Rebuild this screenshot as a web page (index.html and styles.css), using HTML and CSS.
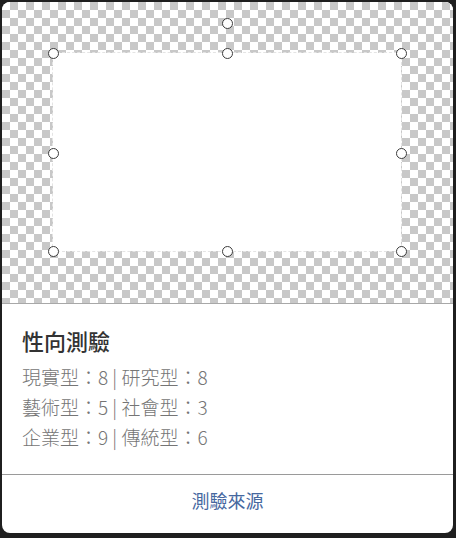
FILE: index.html
```html
<html>
<head>
<meta charset="utf-8">
<title>性向測驗</title>
<link rel="stylesheet" href="styles.css">
</head>
<body>
<div class="card">
  <div class="stage">
    <div class="frame"></div>
    <span class="handle rotate"></span>
    <span class="handle tl"></span>
    <span class="handle tc"></span>
    <span class="handle tr"></span>
    <span class="handle ml"></span>
    <span class="handle mr"></span>
    <span class="handle bl"></span>
    <span class="handle bc"></span>
    <span class="handle br"></span>
  </div>
  <div class="info">
    <h2 class="title">性向測驗</h2>
    <p class="row">現實型：8 | 研究型：8</p>
    <p class="row">藝術型：5 | 社會型：3</p>
    <p class="row">企業型：9 | 傳統型：6</p>
  </div>
  <a href="#" class="source">測驗來源</a>
</div>
</body>
</html>
```

FILE: styles.css
```css
html, body {
  margin: 0;
  padding: 0;
}
body {
  background: #1f1f1f;
  font-family: "Noto Sans CJK TC", "Noto Sans", sans-serif;
  padding: 2px 3px 5px 2px;
}
.card {
  width: 451px;
  height: 531px;
  background: #fff;
  border-radius: 8px;
  overflow: hidden;
  display: flex;
  flex-direction: column;
}
.stage {
  position: relative;
  height: 301px;
  border-bottom: 1px solid #a8a8a8;
  background-color: #fff;
  background-image: conic-gradient(#c8c8c8 25%, transparent 0 50%, #c8c8c8 0 75%, transparent 0);
  background-size: 16px 16px;
}
.frame {
  position: absolute;
  left: 51px;
  top: 51px;
  width: 348px;
  height: 198px;
  background: #fff;
  outline: 1px dashed #e4e4e4;
}
.handle {
  position: absolute;
  width: 9px;
  height: 9px;
  margin: -5px 0 0 -5px;
  border: 1px solid #3c3c3c;
  border-radius: 50%;
  background: #fff;
}
.rotate { left: 225px; top: 21px; }
.tl { left: 51px; top: 51px; }
.tc { left: 225px; top: 51px; }
.tr { left: 399px; top: 51px; }
.ml { left: 51px; top: 151px; }
.mr { left: 399px; top: 151px; }
.bl { left: 51px; top: 249px; }
.bc { left: 225px; top: 249px; }
.br { left: 399px; top: 249px; }
.info {
  padding: 21px 20px 22px;
  border-bottom: 1px solid #9a9a9a;
}
.title {
  margin: 0 0 7px;
  font-size: 22px;
  line-height: 30px;
  font-weight: 500;
  color: #333;
}
.row {
  margin: 0;
  font-size: 19px;
  line-height: 30px;
  font-weight: 300;
  color: #757575;
}
.source {
  display: block;
  padding: 12px 0 20px;
  text-align: center;
  font-size: 18px;
  line-height: 26px;
  font-weight: 400;
  color: #46689f;
  text-decoration: none;
}
```
